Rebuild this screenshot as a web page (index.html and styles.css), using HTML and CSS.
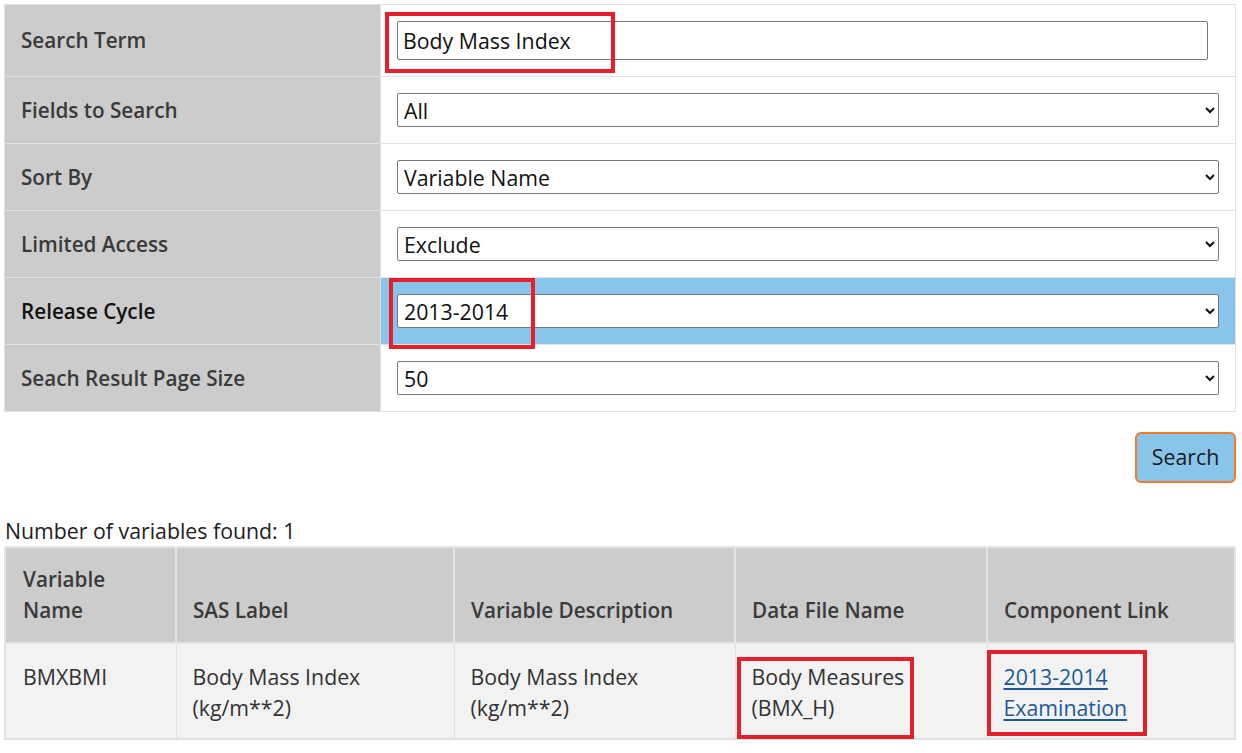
FILE: index.html
```html
<!DOCTYPE html>
<html lang="en">
<head>
<meta charset="utf-8">
<title>Variable Search</title>
<link rel="stylesheet" href="styles.css">
</head>
<body>
<main class="page">
  <table class="form-table">
    <colgroup><col class="col-label"><col></colgroup>
    <tr class="row-first">
      <th class="label">Search Term</th>
      <td class="value"><input class="text-input" type="text" value="Body Mass Index"></td>
    </tr>
    <tr>
      <th class="label">Fields to Search</th>
      <td class="value"><select class="select"><option>All</option></select></td>
    </tr>
    <tr>
      <th class="label">Sort By</th>
      <td class="value"><select class="select"><option>Variable Name</option></select></td>
    </tr>
    <tr>
      <th class="label">Limited Access</th>
      <td class="value"><select class="select"><option>Exclude</option></select></td>
    </tr>
    <tr class="row-active">
      <th class="label">Release Cycle</th>
      <td class="value"><select class="select"><option>2013-2014</option></select></td>
    </tr>
    <tr>
      <th class="label">Seach Result Page Size</th>
      <td class="value"><select class="select"><option>50</option></select></td>
    </tr>
  </table>

  <div class="actions">
    <button class="search-btn" type="button">Search</button>
  </div>

  <p class="count">Number of variables found: 1</p>

  <table class="results">
    <colgroup>
      <col class="c1"><col class="c2"><col class="c3"><col class="c4"><col class="c5">
    </colgroup>
    <thead>
      <tr>
        <th>Variable<br>Name</th>
        <th>SAS Label</th>
        <th>Variable Description</th>
        <th>Data File Name</th>
        <th>Component Link</th>
      </tr>
    </thead>
    <tbody>
      <tr>
        <td>BMXBMI</td>
        <td>Body Mass Index<br>(kg/m**2)</td>
        <td>Body Mass Index<br>(kg/m**2)</td>
        <td>Body Measures<br>(BMX_H)</td>
        <td><a href="#" class="link">2013-2014<br>Examination</a></td>
      </tr>
    </tbody>
  </table>

  <div class="mark mark-1"></div>
  <div class="mark mark-2"></div>
  <div class="mark mark-3"></div>
  <div class="mark mark-4"></div>
</main>
</body>
</html>
```

FILE: styles.css
```css
html, body {
  margin: 0;
  padding: 0;
  background: #ffffff;
}

body {
  font-family: "Open Sans", "Noto Sans", sans-serif;
  font-size: 21.3px;
  color: #222222;
}

.page {
  position: relative;
  padding: 4px 6px 0 4px;
}

/* ---------- search form ---------- */
.form-table {
  width: 100%;
  border-collapse: collapse;
  border: 1px solid #dfe1e4;
}

.col-label {
  width: 376px;
}

.form-table th,
.form-table td {
  border: 1px solid #dfe1e4;
  padding: 16px;
  vertical-align: middle;
}

.label {
  background: #cccccc;
  text-align: left;
  font-weight: 600;
  font-size: 20.7px;
  color: #3a3a3a;
  line-height: 31px;
  padding-left: 17px;
}

.value {
  background: #ffffff;
}

.row-active .value {
  background: #89c4ea;
}

.row-active .label {
  color: #111111;
}

.text-input {
  display: block;
  box-sizing: border-box;
  width: 811px;
  height: 39px;
  margin: 0;
  padding: 0 5px;
  font-family: inherit;
  font-size: 21.3px;
  color: #111111;
  border: 1px solid #767676;
  border-radius: 2px;
  background: #ffffff;
}

.select {
  display: block;
  box-sizing: border-box;
  width: 100%;
  height: 34px;
  margin: 0;
  padding: 0 2px;
  font-family: inherit;
  font-size: 21.3px;
  color: #111111;
  border: 1px solid #767676;
  border-radius: 2px;
  background-color: #ffffff;
}

/* ---------- action ---------- */
.actions {
  display: flex;
  justify-content: flex-end;
  padding-top: 20px;
}

.search-btn {
  box-sizing: border-box;
  width: 101px;
  height: 51px;
  margin: 0;
  font-family: inherit;
  font-size: 21.3px;
  color: #1b1b1b;
  background: #89c4ea;
  border: 2px solid #f37a2c;
  border-radius: 6px;
  padding: 0 0 2px 0;
}

.count {
  margin: 32px 0 0 1px;
  line-height: 31px;
  color: #222222;
}

/* ---------- results ---------- */
.results {
  width: 100%;
  table-layout: fixed;
  border-collapse: collapse;
  border: 2px solid #dfe1e4;
  line-height: 31px;
}

.c1 { width: 171px; }
.c2 { width: 278px; }
.c3 { width: 281px; }
.c4 { width: 252px; }
.c5 { width: auto; }

.results th {
  background: #cccccc;
  font-weight: 600;
  font-size: 20.7px;
  color: #3a3a3a;
  text-align: left;
  vertical-align: bottom;
  padding: 16px 16px 16px 16px;
  border: 2px solid #e2e4e7;
}

.results td {
  background: #f2f2f2;
  color: #333333;
  vertical-align: top;
  padding: 17px 16px 15px 16px;
  border: 1px solid #dfe1e4;
}

.results tbody tr td:first-child,
.results thead tr th:first-child {
  padding-left: 17px;
}

.link {
  color: #1c5a99;
  text-decoration: underline;
  text-underline-offset: 3px;
}

/* ---------- annotation boxes ---------- */
.mark {
  position: absolute;
  box-sizing: border-box;
  border: 4px solid #e5202b;
  pointer-events: none;
}

.mark-1 { left: 385px; top: 12px; width: 230px; height: 61px; }
.mark-2 { left: 389px; top: 278px; width: 146px; height: 71px; }
.mark-3 { left: 737px; top: 657px; width: 177px; height: 82px; }
.mark-4 { left: 987px; top: 650px; width: 160px; height: 86px; }
```
